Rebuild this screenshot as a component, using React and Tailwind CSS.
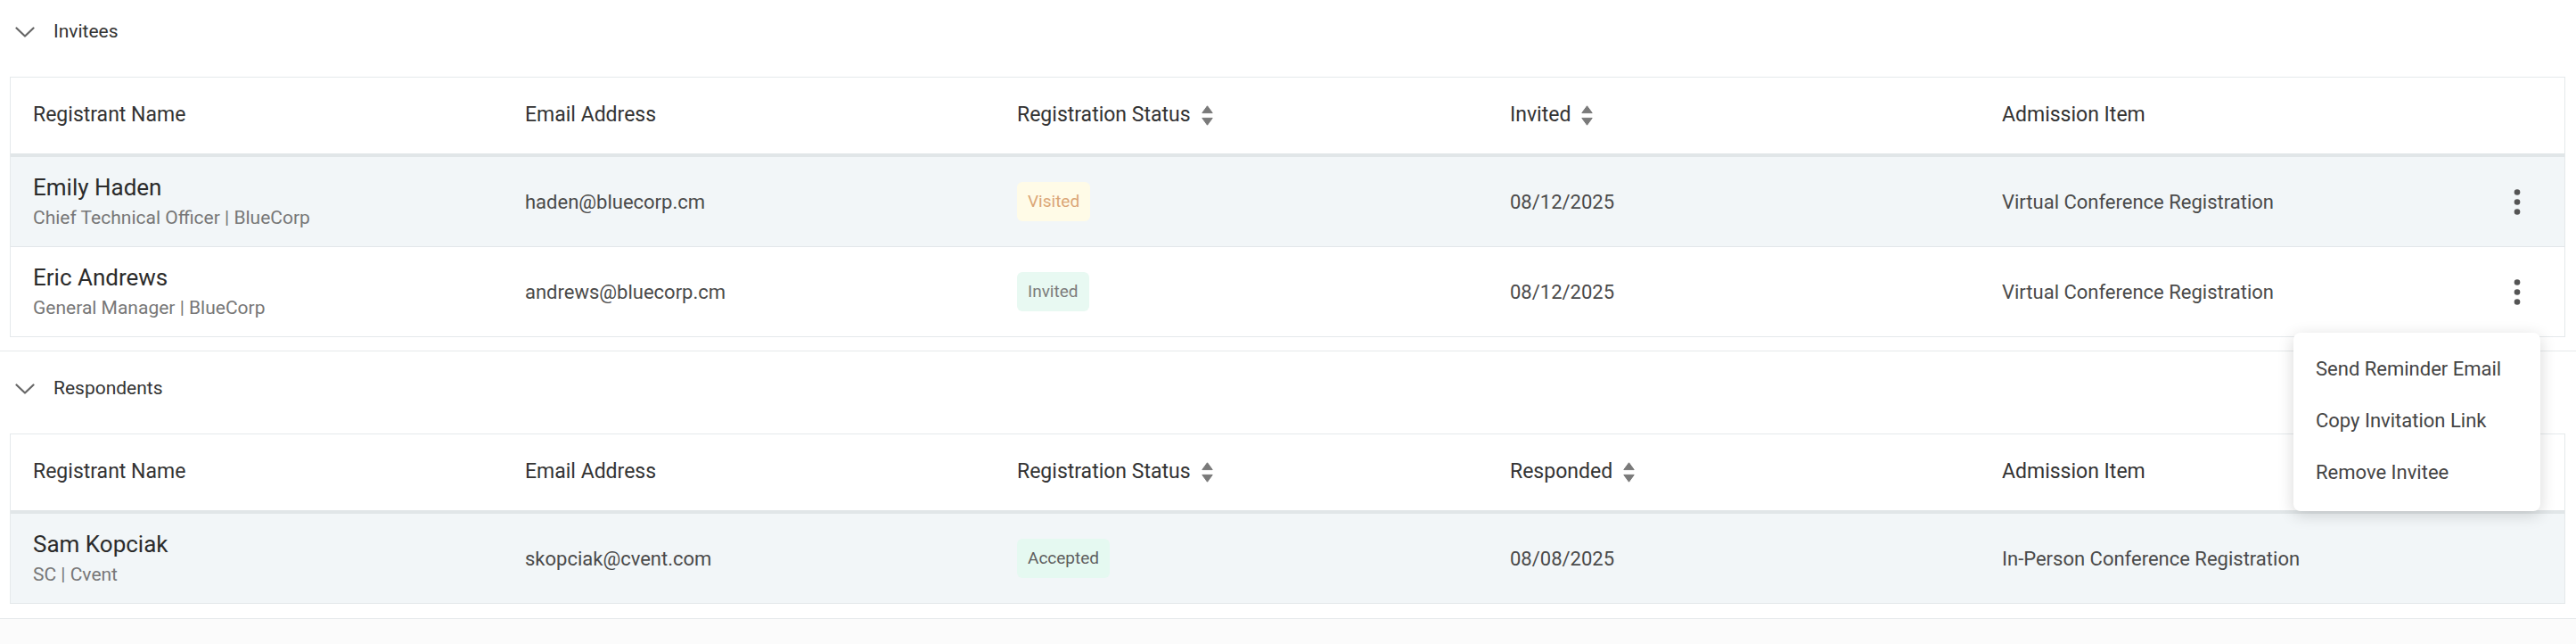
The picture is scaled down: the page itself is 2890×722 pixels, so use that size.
import React from "react";

const COLS = "grid grid-cols-[552px_552px_553px_552px_552px_1fr]";

function Chevron() {
  return (
    <svg width="22" height="12" viewBox="0 0 22 12" className="shrink-0">
      <polyline points="1.5,1.5 11,10.5 20.5,1.5" fill="none" stroke="#666" strokeWidth="2.2" strokeLinecap="round" strokeLinejoin="round" />
    </svg>
  );
}

function SortIcon() {
  return (
    <svg width="13" height="23" viewBox="0 0 13 23" className="shrink-0">
      <path d="M6.5 0.8 L12.2 8.6 L0.8 8.6 Z" fill="#7a7a7a" stroke="#7a7a7a" strokeWidth="1" strokeLinejoin="round" />
      <path d="M0.8 14.4 L12.2 14.4 L6.5 22.2 Z" fill="#7a7a7a" stroke="#7a7a7a" strokeWidth="1" strokeLinejoin="round" />
    </svg>
  );
}

function Kebab() {
  return (
    <svg width="8" height="29" viewBox="0 0 8 29">
      <circle cx="4" cy="3.5" r="3.3" fill="#555" />
      <circle cx="4" cy="14.5" r="3.3" fill="#555" />
      <circle cx="4" cy="25.5" r="3.3" fill="#555" />
    </svg>
  );
}

function Badge({ kind, children }) {
  const styles = {
    visited: "bg-[#fffbe7] text-[#dba676]",
    invited: "bg-[#e8f9f2] text-[#7c7c7c]",
    accepted: "bg-[#e5f9f1] text-[#5e5e5e]",
  };
  return (
    <span className={`inline-flex h-[44px] items-center rounded-[6px] px-[12px] text-[19px] ${styles[kind]}`}>
      {children}
    </span>
  );
}

function HeaderCell({ children, sortable }) {
  return (
    <div className="flex items-center gap-[12px] pl-[25px] text-[23px] text-[#333]">
      <span>{children}</span>
      {sortable && <SortIcon />}
    </div>
  );
}

function Row({ r, highlight, last, showKebab }) {
  return (
    <div className={`${COLS} items-center ${highlight ? "bg-[#f2f6f8]" : "bg-white"} ${last ? "h-[100px]" : "h-[101px] border-b border-[#e3e7ea]"}`}>
      <div className="flex flex-col gap-[7px] pl-[25px]">
        <span className="text-[26px] leading-[30px] text-[#2b2b2b]">{r.name}</span>
        <span className="text-[21px] leading-[25px] text-[#777]">{r.title}</span>
      </div>
      <div className="pl-[25px] text-[22px] text-[#4a4a4a]">{r.email}</div>
      <div className="pl-[25px]">
        <Badge kind={r.kind}>{r.status}</Badge>
      </div>
      <div className="pl-[25px] text-[22px] text-[#4a4a4a]">{r.date}</div>
      <div className="pl-[25px] text-[22px] text-[#4a4a4a]">{r.item}</div>
      <div className="flex justify-center pr-[2px]">{showKebab && <Kebab />}</div>
    </div>
  );
}

function Table({ dateLabel, rows, showKebab }) {
  return (
    <div className="border border-[#e5e9eb] bg-white">
      <div className={`${COLS} h-[89px] items-center border-b-4 border-[#e1e6e8]`}>
        <HeaderCell>Registrant Name</HeaderCell>
        <HeaderCell>Email Address</HeaderCell>
        <HeaderCell sortable>Registration Status</HeaderCell>
        <HeaderCell sortable>{dateLabel}</HeaderCell>
        <HeaderCell>Admission Item</HeaderCell>
        <div />
      </div>
      {rows.map((r, i) => (
        <Row key={r.name} r={r} highlight={i === 0} last={i === rows.length - 1} showKebab={showKebab} />
      ))}
    </div>
  );
}

function SectionTitle({ children, className }) {
  return (
    <div className={`flex items-center gap-[21px] pl-[6px] ${className}`}>
      <Chevron />
      <span className="text-[21px] text-[#333]">{children}</span>
    </div>
  );
}

export default function App() {
  const invitees = [
    {
      name: "Emily Haden",
      title: "Chief Technical Officer | BlueCorp",
      email: "haden@bluecorp.cm",
      status: "Visited",
      kind: "visited",
      date: "08/12/2025",
      item: "Virtual Conference Registration",
    },
    {
      name: "Eric Andrews",
      title: "General Manager | BlueCorp",
      email: "andrews@bluecorp.cm",
      status: "Invited",
      kind: "invited",
      date: "08/12/2025",
      item: "Virtual Conference Registration",
    },
  ];
  const respondents = [
    {
      name: "Sam Kopciak",
      title: "SC | Cvent",
      email: "skopciak@cvent.com",
      status: "Accepted",
      kind: "accepted",
      date: "08/08/2025",
      item: "In-Person Conference Registration",
    },
  ];

  return (
    <div className="relative min-h-[722px] w-full bg-[#fbfbfb] font-['Roboto','Noto_Sans',sans-serif]">
      <section className="border-b border-[#e6e9eb] bg-white pl-[11px] pr-[12px] pb-[15px]">
        <SectionTitle className="h-[72px] mb-[14px]">Invitees</SectionTitle>
        <Table dateLabel="Invited" rows={invitees} showKebab />
      </section>
      <section className="border-b border-[#e6e9eb] bg-white pl-[11px] pr-[12px] pb-[16px]">
        <SectionTitle className="h-[84px] mb-[8px]">Respondents</SectionTitle>
        <Table dateLabel="Responded" rows={respondents} showKebab={false} />
      </section>

      <div className="absolute right-[40px] top-[373px] w-[277px] rounded-[8px] bg-white pt-[11px] pb-[15px] shadow-[0_4px_18px_rgba(0,0,0,0.16)]">
        {["Send Reminder Email", "Copy Invitation Link", "Remove Invitee"].map((t) => (
          <div key={t} className="flex h-[58px] items-center pl-[25px] text-[22px] text-[#444]">
            {t}
          </div>
        ))}
      </div>
    </div>
  );
}
